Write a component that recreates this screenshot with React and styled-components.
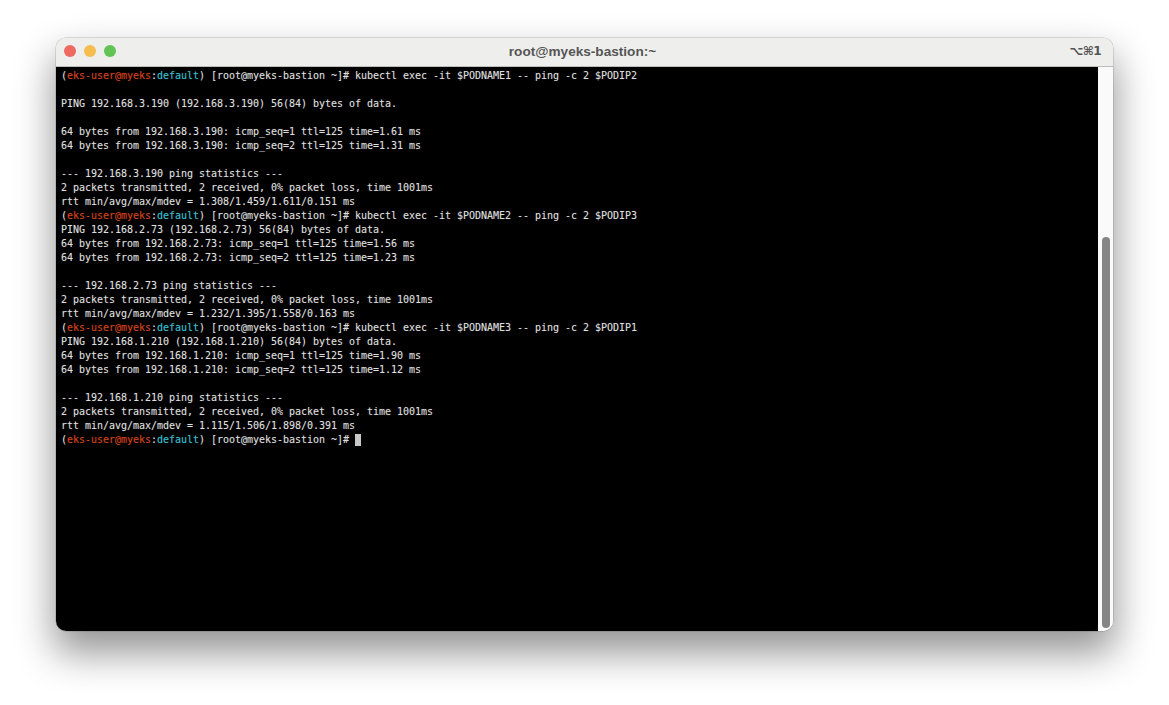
import styled, { createGlobalStyle } from 'styled-components';

const PROMPT = { user: 'eks-user@myeks', ctx: 'default', rest: ' [root@myeks-bastion ~]# ' };

const lines = [
  { prompt: true, text: 'kubectl exec -it $PODNAME1 -- ping -c 2 $PODIP2' },
  { text: '' },
  { text: 'PING 192.168.3.190 (192.168.3.190) 56(84) bytes of data.' },
  { text: '' },
  { text: '64 bytes from 192.168.3.190: icmp_seq=1 ttl=125 time=1.61 ms' },
  { text: '64 bytes from 192.168.3.190: icmp_seq=2 ttl=125 time=1.31 ms' },
  { text: '' },
  { text: '--- 192.168.3.190 ping statistics ---' },
  { text: '2 packets transmitted, 2 received, 0% packet loss, time 1001ms' },
  { text: 'rtt min/avg/max/mdev = 1.308/1.459/1.611/0.151 ms' },
  { prompt: true, text: 'kubectl exec -it $PODNAME2 -- ping -c 2 $PODIP3' },
  { text: 'PING 192.168.2.73 (192.168.2.73) 56(84) bytes of data.' },
  { text: '64 bytes from 192.168.2.73: icmp_seq=1 ttl=125 time=1.56 ms' },
  { text: '64 bytes from 192.168.2.73: icmp_seq=2 ttl=125 time=1.23 ms' },
  { text: '' },
  { text: '--- 192.168.2.73 ping statistics ---' },
  { text: '2 packets transmitted, 2 received, 0% packet loss, time 1001ms' },
  { text: 'rtt min/avg/max/mdev = 1.232/1.395/1.558/0.163 ms' },
  { prompt: true, text: 'kubectl exec -it $PODNAME3 -- ping -c 2 $PODIP1' },
  { text: 'PING 192.168.1.210 (192.168.1.210) 56(84) bytes of data.' },
  { text: '64 bytes from 192.168.1.210: icmp_seq=1 ttl=125 time=1.90 ms' },
  { text: '64 bytes from 192.168.1.210: icmp_seq=2 ttl=125 time=1.12 ms' },
  { text: '' },
  { text: '--- 192.168.1.210 ping statistics ---' },
  { text: '2 packets transmitted, 2 received, 0% packet loss, time 1001ms' },
  { text: 'rtt min/avg/max/mdev = 1.115/1.506/1.898/0.391 ms' },
  { prompt: true, cursor: true, text: '' },
];

const App = () => {
  return (
    <>
      <GlobalStyle />
      <Window>
        <TitleBar>
          <Lights>
            <Light color="#ee6a5f" />
            <Light color="#f5bd4f" />
            <Light color="#61c454" />
          </Lights>
          <Title>root@myeks-bastion:~</Title>
          <Shortcut>⌥⌘1</Shortcut>
        </TitleBar>
        <Body>
          <Screen>
            {lines.map((line, i) => (
              <Line key={i}>
                {line.prompt && (
                  <>
                    (<User>{PROMPT.user}</User>:<Context>{PROMPT.ctx}</Context>){PROMPT.rest}
                  </>
                )}
                {line.text}
                {line.cursor && <Cursor />}
              </Line>
            ))}
          </Screen>
          <Track>
            <Thumb />
          </Track>
        </Body>
      </Window>
    </>
  );
};

const GlobalStyle = createGlobalStyle`
  html, body {
    margin: 0;
    height: 100%;
    background: #fff;
    overflow: hidden;
  }
`;

const Window = styled.div`
  width: 1057px;
  height: 593px;
  margin: 38px 0 0 56px;
  display: flex;
  flex-direction: column;
  border-radius: 10px;
  overflow: hidden;
  box-shadow: 0 0 0 0.5px rgba(0, 0, 0, 0.22), 0 20px 38px 2px rgba(0, 0, 0, 0.42);
`;

const TitleBar = styled.div`
  height: 29px;
  flex: none;
  display: grid;
  grid-template-columns: 1fr auto 1fr;
  align-items: center;
  box-sizing: border-box;
  padding: 0 12px 2px 8px;
  background: #eeeeec;
  border-bottom: 1px solid #bdbdbb;
`;

const Lights = styled.div`
  display: flex;
  gap: 8px;
`;

const Light = styled.span`
  width: 12px;
  height: 12px;
  border-radius: 50%;
  background: ${(p) => p.color};
`;

const Title = styled.div`
  font: 700 13.6px 'Liberation Sans', Arial, sans-serif;
  color: #555;
`;

const Shortcut = styled.div`
  justify-self: end;
  font: 700 12px 'DejaVu Sans', sans-serif;
  letter-spacing: -0.6px;
  color: #555;
`;

const Body = styled.div`
  flex: 1;
  min-height: 0;
  display: flex;
`;

const Screen = styled.div`
  flex: 1;
  background: #000;
  box-sizing: border-box;
  padding: 2px 5px 0;
`;

const Line = styled.div`
  height: 14px;
  display: flex;
  align-items: center;
  white-space: pre;
  font: 10px/14px 'DejaVu Sans Mono', 'Liberation Mono', monospace;
  letter-spacing: -0.02px;
  color: #dedede;
  text-shadow: 0 0 1px rgba(222, 222, 222, 0.35);
`;

const User = styled.span`
  color: #d0421c;
  text-shadow: 0 0 1px rgba(208, 66, 28, 0.4);
`;

const Context = styled.span`
  color: #38bccb;
  text-shadow: 0 0 1px rgba(56, 188, 203, 0.4);
`;

const Cursor = styled.span`
  width: 6px;
  height: 12px;
  background: #c8c8c8;
`;

const Track = styled.div`
  width: 15px;
  flex: none;
  display: flex;
  flex-direction: column;
  justify-content: flex-end;
  box-sizing: border-box;
  padding: 0 3px 3px 4px;
  background: #fafafa;
`;

const Thumb = styled.div`
  height: 391px;
  border-radius: 4px;
  background: #858585;
`;

export default App;
